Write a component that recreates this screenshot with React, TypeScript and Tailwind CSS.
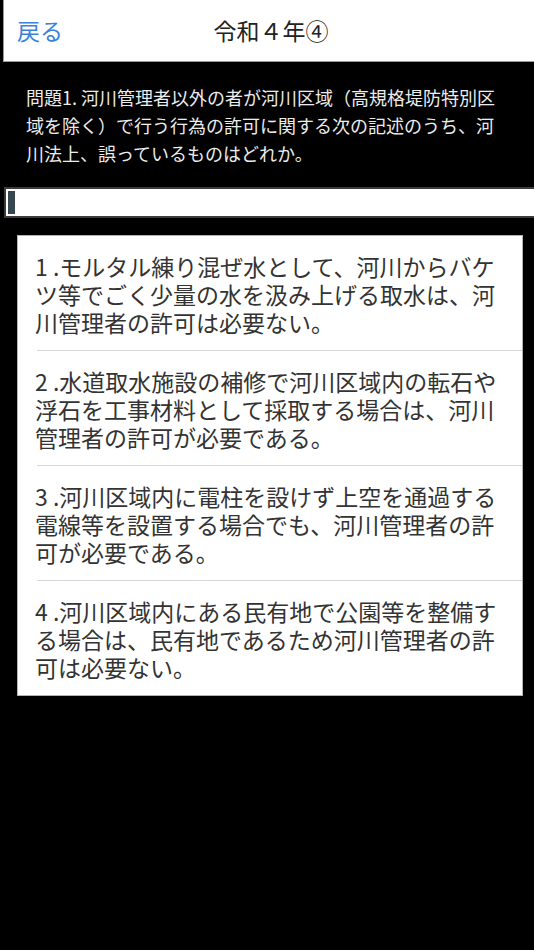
import React from 'react'

const options = [
  '1 .モルタル練り混ぜ水として、河川からバケツ等でごく少量の水を汲み上げる取水は、河川管理者の許可は必要ない。',
  '2 .水道取水施設の補修で河川区域内の転石や浮石を工事材料として採取する場合は、河川管理者の許可が必要である。',
  '3 .河川区域内に電柱を設けず上空を通過する電線等を設置する場合でも、河川管理者の許可が必要である。',
  '4 .河川区域内にある民有地で公園等を整備する場合は、民有地であるため河川管理者の許可は必要ない。'
]

const font = { fontFamily: '"Noto Sans CJK JP", "Noto Sans", sans-serif' }

const App: React.FC = () => {
  return (
    <div className="min-h-[950px] w-full overflow-hidden bg-black" style={font}>
      <header className="ml-[3px] grid h-[62px] grid-cols-[1fr_auto_1fr] items-center border-b border-l border-[#9a9a9a] bg-white">
        <button className="justify-self-start pl-[13px] text-[23px] text-[#3b82dc]">戻る</button>
        <h1 className="pl-[4px] text-[23px] text-[#222]">令和４年④</h1>
        <div />
      </header>

      <p className="px-[26px] pt-[21px] text-[18px] leading-[28px] text-[#ececec]">
        問題1. 河川管理者以外の者が河川区域（高規格堤防特別区
        <br />
        域を除く）で行う行為の許可に関する次の記述のうち、河
        <br />
        川法上、誤っているものはどれか。
      </p>

      <div className="mt-[20px] ml-[4px] -mr-[4px] h-[31px] border-2 border-[#3c3c3c] bg-white p-[2px]">
        <div className="h-full w-[7px] bg-[#37474f]" />
      </div>

      <div className="mt-[17px] ml-[17px] mr-[11px] border border-[#b4b4b4] bg-white">
        {options.map((text, i) => (
          <div
            key={i}
            className={`ml-[19px] pt-[16px] pr-[16px] pb-[14px] ${i < options.length - 1 ? 'border-b border-[#d6d6d6]' : ''}`}
          >
            <p className="-ml-[2px] text-[23px] leading-[28px] text-[#333]">{text}</p>
          </div>
        ))}
      </div>
    </div>
  )
}

export default App
